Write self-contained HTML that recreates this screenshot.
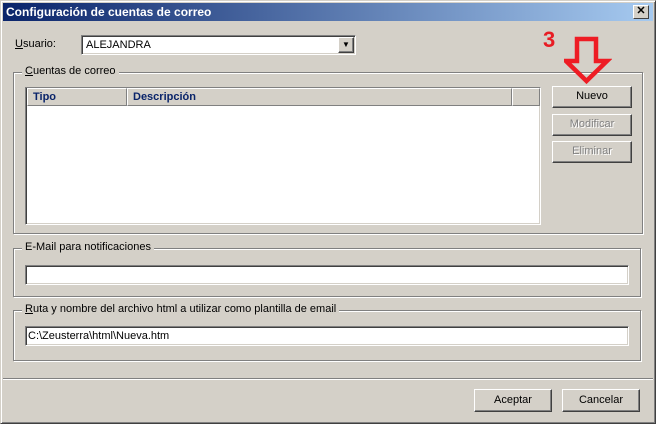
<!DOCTYPE html>
<html><head><style>
*{box-sizing:border-box;margin:0;padding:0}
body{width:656px;height:424px;background:#d4d0c8;font-family:"Liberation Sans",Tahoma,sans-serif;font-size:11px;color:#000;position:relative;overflow:hidden}
.a{position:absolute}
.win{left:0;top:0;width:656px;height:424px;border:1px solid;border-color:#d4d0c8 #404040 #404040 #d4d0c8;box-shadow:inset 1px 1px #fff,inset -1px -1px #808080}
.title{left:3px;top:3px;width:650px;height:18px;background:linear-gradient(90deg,#0a246a,#a6caf0);color:#fff;font-weight:bold;font-size:12px;padding:2px 3px;font-family:"Liberation Sans",sans-serif}
.xb{left:633px;top:5px;width:16px;height:14px;background:#d4d0c8;border:1px solid;border-color:#fff #404040 #404040 #fff;font-size:11px;font-weight:bold;text-align:center;line-height:11px;color:#000}
.sunk{background:#fff;border:1px solid;border-color:#808080 #fff #fff #808080;box-shadow:inset 1px 1px #404040,inset -1px -1px #d4d0c8}
.grp{border:1px solid #808080;box-shadow:1px 1px #fff,inset 1px 1px #fff}
.lg{background:#d4d0c8;padding:0 3px;top:-8px;left:8px;white-space:nowrap}
.btn{background:#d4d0c8;border:1px solid;border-color:#fff #404040 #404040 #fff;box-shadow:inset -1px -1px #808080;text-align:center;line-height:19px}
.dis{color:#808080;text-shadow:1px 1px #fff}
.hd{top:0;height:18px;background:#d4d0c8;border:1px solid;border-color:#fff #808080 #808080 #fff;color:#0a246a;font-weight:bold;padding:2px 5px}
u{text-decoration:underline}
</style></head><body>
<div class="a win"></div>
<div class="a title">Configuración de cuentas de correo</div>
<div class="a xb">✕</div>
<div class="a" style="left:15px;top:38px"><u>U</u>suario:</div>
<div class="a sunk" style="left:81px;top:35px;width:275px;height:20px;padding:3px 4px">ALEJANDRA</div>
<div class="a btn" style="left:338px;top:37px;width:16px;height:16px;line-height:14px;font-size:8px">▼</div>
<div class="a grp" style="left:13px;top:72px;width:630px;height:162px"><div class="a lg"><u>C</u>uentas de correo</div></div>
<div class="a sunk" style="left:25px;top:87px;width:516px;height:138px">
<div class="a hd" style="left:1px;width:100px">Tipo</div>
<div class="a hd" style="left:101px;width:385px">Descripción</div>
<div class="a hd" style="left:486px;width:28px"></div>
</div>
<div class="a btn" style="left:552px;top:86px;width:80px;height:22px">Nuevo</div>
<div class="a btn dis" style="left:552px;top:114px;width:80px;height:22px">Modificar</div>
<div class="a btn dis" style="left:552px;top:141px;width:80px;height:22px">Eliminar</div>
<div class="a" style="left:543px;top:27px;color:#e81c24;font-weight:bold;font-size:22px;font-family:'Liberation Sans',sans-serif">3</div>
<svg class="a" style="left:564px;top:36px" width="48" height="50"><path d="M13 3H32V25H43L22.5 45L2 25H13Z" fill="none" stroke="#ee1c24" stroke-width="4.5" stroke-linejoin="miter"/></svg>
<div class="a grp" style="left:13px;top:248px;width:628px;height:49px"><div class="a lg">E-Mail para notificaciones</div></div>
<div class="a sunk" style="left:25px;top:265px;width:604px;height:20px"></div>
<div class="a grp" style="left:13px;top:310px;width:628px;height:51px"><div class="a lg"><u>R</u>uta y nombre del archivo html a utilizar como plantilla de email</div></div>
<div class="a sunk" style="left:25px;top:326px;width:604px;height:20px;padding:3px 2px">C:\Zeusterra\html\Nueva.htm</div>
<div class="a" style="left:3px;top:378px;width:650px;height:2px;border-top:1px solid #808080;border-bottom:1px solid #fff"></div>
<div class="a btn" style="left:474px;top:389px;width:78px;height:23px;line-height:21px">Aceptar</div>
<div class="a btn" style="left:562px;top:389px;width:78px;height:23px;line-height:21px">Cancelar</div>
</body></html>
